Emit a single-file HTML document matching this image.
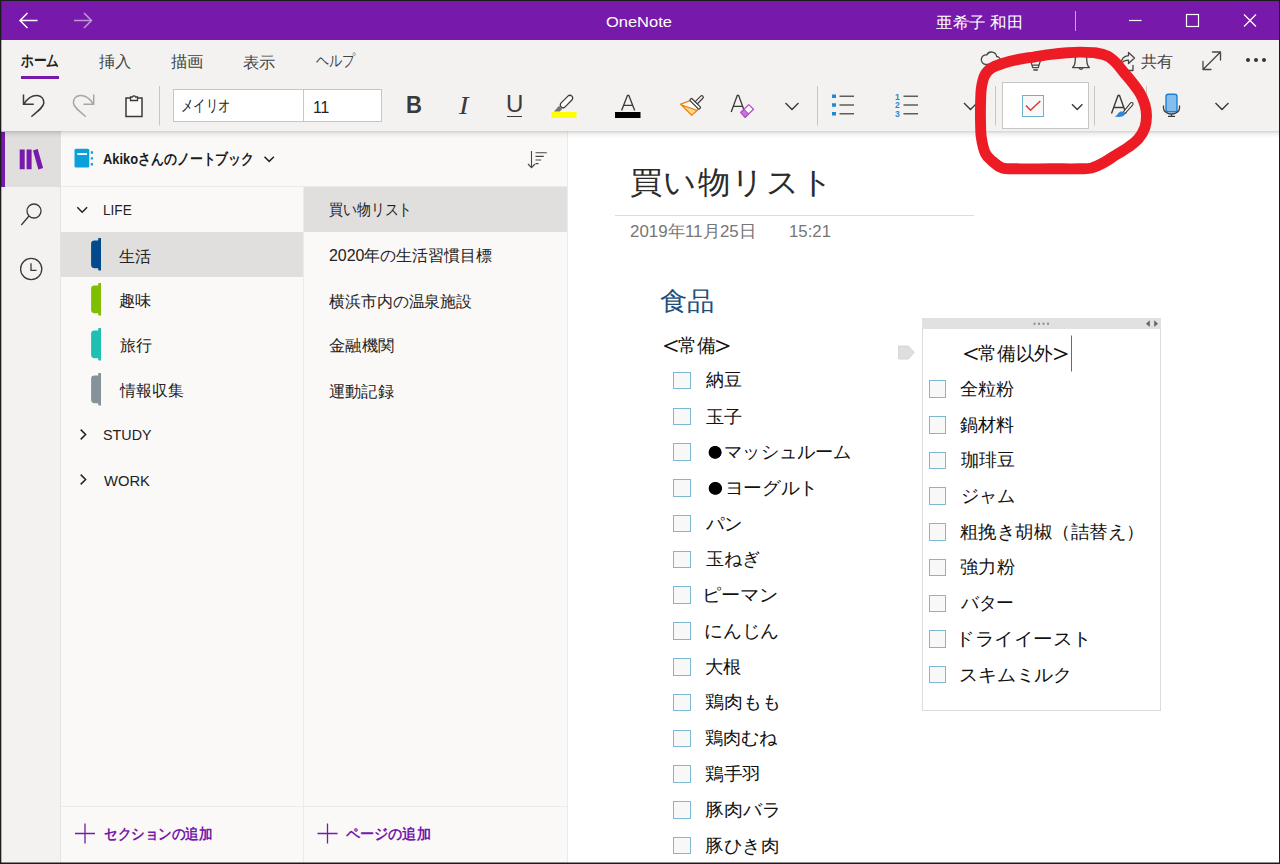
<!DOCTYPE html>
<html lang="ja">
<head>
<meta charset="utf-8">
<title>OneNote</title>
<style>
*{box-sizing:border-box;margin:0;padding:0}
html,body{width:1280px;height:864px;overflow:hidden;background:#fff}
body{position:relative;font-family:"Liberation Sans",sans-serif;color:#222;font-size:15px}
.a{position:absolute}
.t{position:absolute;white-space:nowrap;line-height:1;transform-origin:0 50%}
svg{position:absolute;overflow:visible}
/* window frame */
#frame{left:0;top:0;width:1280px;height:864px;border:1px solid #1b1b1b;box-shadow:inset 0 -1px 0 rgba(27,27,27,.5),inset 1px 0 0 rgba(27,27,27,.3);z-index:50;pointer-events:none}
#title{left:0;top:0;width:1280px;height:40px;background:#7719aa}
#rib{left:0;top:40px;width:1280px;height:91px;background:#f3f2f1}
#ribshadow{left:0;top:131px;width:1280px;height:7px;background:linear-gradient(rgba(0,0,0,.17),rgba(0,0,0,.06) 40%,rgba(0,0,0,0))}
#rail{left:0;top:131px;width:61px;height:733px;background:#f3f2f1}
#railsel{left:0;top:131px;width:61px;height:56px;background:#e1dfdd}
#railbar{left:1px;top:132px;width:4px;height:55px;background:#7719aa}
#secpane{left:61px;top:131px;width:243px;height:733px;background:#faf9f8}
#pagepane{left:304px;top:131px;width:264px;height:733px;background:#faf9f8;border-right:1px solid #edebe9}
#content{left:568px;top:131px;width:712px;height:733px;background:#fff}
.cb{width:17.500px;height:17.500px;background:#f8f8f8;border:1.200px solid #7db9d2}
.it{font-size:18px;color:#111}
.dot{display:inline-block;width:18px;height:18px;color:transparent;overflow:hidden;vertical-align:top;background:radial-gradient(circle at 50% 52%,#000 6px,rgba(0,0,0,0) 6.800px)}
.br{font-size:1.450em;line-height:0;vertical-align:-.070em}.brl{margin-right:-6.500px}.brr{margin-left:-6.500px}
</style>
</head>
<body>
<div class="a" id="title"></div>
<div class="a" id="rib"></div>
<div class="a" id="rail"></div>
<div class="a" id="railsel"></div>
<div class="a" id="railbar"></div>
<div class="a" id="secpane"></div>
<div class="a" id="pagepane"></div>
<div class="a" id="content"></div>
<div class="a" id="ribshadow"></div>
<!--TITLEBAR-->
<svg style="left:0;top:0" width="1280" height="40" fill="none" stroke="#fff" stroke-width="1.5">
<path d="M37.5 20.5H20M27.5 13 20 20.5 27.5 28"/>
<path d="M74 20.5H91.5M84 13 91.5 20.5 84 28" stroke-opacity=".55"/>
<path d="M1075.5 11V31" stroke-width="1" stroke-opacity=".6"/>
<path d="M1129 20.5H1141.5" stroke-width="1.2"/>
<rect x="1186.5" y="14.5" width="12" height="12" stroke-width="1.2"/>
<path d="M1244 14.5 1256 26.5M1256 14.5 1244 26.5" stroke-width="1.2"/>
</svg>
<div class="t" id="t_app" style="left:605.68px;top:13.75px;font-size:15.5px;color:#fff;transform:scaleX(1.0616)">OneNote</div>
<div class="t" id="t_user" style="left:936.25px;top:14.87px;font-size:16px;color:#fff;transform:scaleX(1.0336)">亜希子 和田</div>
<!--TABS-->
<div class="t" id="tab0" style="left:21.00px;top:53.00px;font-size:16px;font-weight:bold;color:#222;transform:scaleX(0.7927)">ホーム</div>
<div class="a" style="left:21px;top:76px;width:38px;height:3px;background:#7719aa"></div>
<div class="t" id="tab1" style="left:98.51px;top:54.13px;font-size:16px;color:#444;transform:scaleX(1.0083)">挿入</div>
<div class="t" id="tab2" style="left:170.75px;top:54.13px;font-size:16px;color:#444;transform:scaleX(1.0249)">描画</div>
<div class="t" id="tab3" style="left:242.97px;top:54.50px;font-size:16px;color:#444;transform:scaleX(1.0174)">表示</div>
<div class="t" id="tab4" style="left:316.24px;top:53.00px;font-size:16px;color:#444;transform:scaleX(0.8181)">ヘルプ</div>
<svg style="left:0;top:0" width="1280" height="131" fill="none" stroke="#484644" stroke-width="1.3" stroke-linecap="round" stroke-linejoin="round">
<!-- cloud -->
<path d="M985.5 64.5h10.5a4 4 0 0 0 .6-8 5.2 5.2 0 0 0-9.8-1.6 4.4 4.4 0 0 0-1.3 9.6z"/>
<!-- bulb -->
<path d="M1030.900 61.600c-1.200-1.200-1.500-2.200-1.500-3.200a6.100 6.100 0 0 1 12.200 0c0 1-.300 2-1.500 3.200l-1.900 6.100h-5.400zM1033.200 65.200h5M1033.800 70h3.600"/>
<!-- bell -->
<path d="M1072.600 67.600c2-1.800 2.600-3.600 2.600-7.600 0-4.200 2.300-6.800 5.800-6.800s5.800 2.600 5.800 6.800c0 4 .600 5.800 2.600 7.600zM1079.200 68.300a2 2 0 0 0 3.600 0"/>
<!-- share -->
<path d="M1128.500 52.500l6 5.500-6 5.500v-3.400c-3.600 0-6 1.400-7.500 4 .3-5 3-8 7.500-8.400zM1124.500 66.500v4h8.500v-5"/>
<!-- expand -->
<path d="M1203 69.500 1220.500 52M1212.500 52h8v8M1203 61.500v8h8"/>
</svg>
<div class="a" style="left:1245.500px;top:58px;width:4px;height:4px;border-radius:2px;background:#333;box-shadow:8px 0 0 #333,16px 0 0 #333"></div>
<div class="t" id="t_share" style="left:1141.25px;top:53.88px;font-size:15.500px;color:#444;transform:scaleX(1.0081)">共有</div>
<!--RIBBON-->
<svg style="left:0;top:0" width="1280" height="131" fill="none" stroke="#3b3a39" stroke-width="1.5" stroke-linecap="butt" stroke-linejoin="miter">
<!-- undo -->
<path d="M23.500 94.500V104.300H33.800M23.800 104c3.500-5.500 8.500-8.800 13.400-8.600 4.400.3 7 3.700 6.600 7.800-.5 4-5 7.500-12.500 13.500"/>
<!-- redo -->
<path stroke="#a8a6a4" d="M93.700 94.500V104.300H83.400M93.400 104c-3.500-5.500-8.500-8.800-13.400-8.600-4.400.3-7 3.700-6.600 7.800.5 4 5 7.500 12.500 13.500"/>
<!-- clipboard -->
<path fill="#faf9f8" d="M126 98h16v18.500h-16z"/>
<path fill="#faf9f8" d="M130.500 100.500v-3.500h2a1.600 1.600 0 0 1 3 0h2v3.500z" stroke-width="1.300"/>
<!-- separators -->
<path stroke="#c8c6c4" stroke-width="1" d="M159.500 86V125.500M817.500 86V125.500M995.500 86V125.500M1094.500 86V125.500M1146.500 86V125.500"/>
</svg>
<div class="a" style="left:173px;top:89px;width:209px;height:33px;background:#fff;border:1px solid #c8c6c4"></div>
<div class="a" style="left:303px;top:90px;width:1px;height:31px;background:#c8c6c4"></div>
<div class="t" id="t_font" style="left:181.19px;top:98.00px;font-size:15.500px;color:#222;transform:scaleX(0.7757)">メイリオ</div>
<div class="t" id="t_size" style="left:312.50px;top:99.50px;font-size:16px;color:#222;transform:scaleX(0.9865)">11</div>
<div class="t" id="t_B" style="left:405.79px;top:94.18px;font-size:23.600px;font-weight:bold;color:#3b3a39;transform:scaleX(0.9339)">B</div>
<div class="t" id="t_I" style="left:459.21px;top:92.55px;font-size:25px;font-style:italic;font-family:'Liberation Serif',serif;color:#3b3a39;transform:scaleX(1.1433)">I</div>
<div class="t" id="t_U" style="left:506.18px;top:93.03px;font-size:23.300px;color:#3b3a39;transform:scaleX(1.0319)">U</div>
<div class="a" style="left:507px;top:115.500px;width:14.500px;height:1.500px;background:#3b3a39"></div>
<!-- highlighter -->
<svg style="left:0;top:0" width="1280" height="131" fill="none" stroke="#3b3a39" stroke-width="1.300" stroke-linejoin="round">
<path d="M559 105.800l3.300 3.300-2.600 2.400h-5.700z" fill="#757575" stroke="none"/>
<g transform="translate(566.300 101.700) rotate(-45)"><rect x="-7.300" y="-2.800" width="15.200" height="5.600" rx="2.800" fill="#fbfbfb"/></g>
<rect x="551.500" y="112" width="25" height="6" fill="#ffff00" stroke="none"/>
<rect x="615" y="112" width="25.500" height="6" fill="#000" stroke="none"/>
<path d="M621.600 110.500 627.500 95.300h1.300L634.700 110.500M623.700 105.300h8.900" stroke-width="1.350" stroke-linejoin="miter"/>
</svg>
<!-- format painter -->
<svg style="left:0;top:0" width="1280" height="131" fill="none" stroke-linejoin="round">
<g transform="translate(695.2 103.8) rotate(45)">
<path d="M-5.700 1.300H6.200L5.500 10.500H-9.900z" fill="#fff" stroke="#e8861c" stroke-width="1.300"/>
<path d="M-7 9.600 6 3.300 5.500 10.500H-9.900z" fill="#fcd88a" stroke="#e8861c" stroke-width="1.100"/>
<rect x="-1.500" y="-10.800" width="3" height="10" rx="1.500" fill="#faf9f8" stroke="#3b3a39" stroke-width="1.200"/>
<rect x="-6.600" y="-1.400" width="13.200" height="2.800" rx=".800" fill="#fff" stroke="#3b3a39" stroke-width="1.200"/>
</g>
</svg>
<!-- A eraser -->
<svg style="left:0;top:0" width="1280" height="131" fill="none">
<path d="M731.200 112 737.300 95.300h1.300L744.700 112M733.400 106.300h9.200" stroke="#3b3a39" stroke-width="1.350"/>
<path d="M740.800 112.500 748.700 104.600 753.500 109.200 745.200 117.300z" fill="#fff" stroke="#b14fc5" stroke-width="1.300" stroke-linejoin="round"/>
<path d="M740.800 112.500 743.900 109.400 748.500 114 745.200 117.300z" fill="#c875d8" stroke="#b14fc5" stroke-width="1.100" stroke-linejoin="round"/>
<!-- chevrons -->
<path d="M785.500 103l6.500 6.500 6.500-6.500M964 103l6.500 6.500 6.500-6.500M1215.500 103l6.500 6.500 6.500-6.500" stroke="#3b3a39" stroke-width="1.400"/>
<!-- bullets -->
<path d="M832 96.300h4M832 105h4M832 113.700h4" stroke="#1e8ad6" stroke-width="3.600"/>
<path d="M839.500 96.300h14.500M839.500 105h14.500M839.500 113.700h14.500M903.500 96.300h14.500M903.500 105h14.500M903.500 113.700h14.500" stroke="#605e5c" stroke-width="1.500"/>
</svg>
<div class="t" style="left:895px;top:92.500px;font-size:8.500px;font-weight:bold;color:#1e8ad6;line-height:8.700px;white-space:pre">1
2
3</div>
<!-- todo tag button -->
<div class="a" style="left:1002px;top:82px;width:87px;height:47px;background:#fff;border:1px solid #c8c6c4"></div>
<div class="a" style="left:1022px;top:94.500px;width:22px;height:22px;background:#f8f8f8;border:1.300px solid #6fb1cc"></div>
<svg style="left:0;top:0" width="1280" height="131" fill="none">
<path d="M1026 105.500l4.500 4.800 9.800-9.300" stroke="#d83b30" stroke-width="1.500"/>
<path d="M1072 104.300l5.200 5.200 5.200-5.200" stroke="#3b3a39" stroke-width="1.400"/>
<!-- A brush -->
<path d="M1111.500 113.500 1118 95.500h1.500L1126 113.500M1113.800 107.500h9.500" stroke="#3b3a39" stroke-width="1.400"/>
<path d="M1132.500 102.800c.8.600.6 1.500 0 2.300l-7.500 8.500-1.800-1.500 7-8.800c.7-.9 1.600-1 2.300-.500z" fill="#fff" stroke="#3b3a39" stroke-width="1.100"/>
<path d="M1123 111.800c1.300.700 2 1.700 1.800 3-2.200 2.300-6 2.600-10.500 1.700 2-.8 3-1.800 4-3.300 1.200-1.700 3-2.200 4.700-1.400z" fill="#2b88d8"/>
<!-- mic -->
<rect x="1166" y="94.200" width="11" height="17.500" rx="2.200" fill="#83beec" stroke="#1e7fd4" stroke-width="1.400"/>
<path d="M1163.500 105.500v2.500a8 6 0 0 0 16 0v-2.500M1171.500 113.700v2.500M1168 116.400h7" stroke="#3b3a39" stroke-width="1.300"/>
</svg>
<!--RAIL-->
<svg style="left:0;top:0" width="61" height="864" fill="none" stroke="#3b3a39" stroke-width="1.300">
<path d="M19.700 149.600h5v19.700h-5zM26.600 149.600h5v19.700h-5zM33 150.400l4.700-1.300 5.400 19-4.700 1.300z" fill="#7719aa" stroke="none"/>
<circle cx="34" cy="211" r="7"/><path d="M29 216 21.300 225"/>
<circle cx="31.200" cy="269" r="10.600"/><path d="M31 263.300v7h5.500"/>
</svg>
<!--SECTIONS-->
<div class="a" style="left:60px;top:187px;width:1px;height:677px;background:#e6e4e2"></div>
<div class="a" style="left:61px;top:232px;width:243px;height:45px;background:#e1dfdd"></div>
<div class="a" style="left:61px;top:186px;width:507px;height:1px;background:#edebe9"></div>
<div class="a" style="left:303px;top:186px;width:1px;height:678px;background:#edebe9"></div>
<div class="a" style="left:61px;top:806px;width:507px;height:1px;background:#edebe9"></div>
<svg style="left:0;top:0" width="320" height="864" fill="none">
<rect x="74.500" y="148.800" width="14.800" height="18.800" rx="1.500" fill="#08a1dc"/>
<path d="M77.300 154h9.700" stroke="#fff" stroke-width="1.900"/>
<path d="M90.800 152.500h2.200M90.800 158.400h2.200M90.800 164.300h2.200" stroke="#0ea1de" stroke-width="2.400"/>
<path d="M264.500 156.700l4.700 4.700 4.700-4.700M77.300 207.300l4.900 4.900 4.900-4.900M80.700 429.600l4.900 4.900-4.900 4.900M80.700 474.600l4.900 4.900-4.900 4.900" stroke="#222" stroke-width="1.500"/>
<path d="M101 238h-2q-.800 0-.800.800v1.600h-3.700q-3.400 0-3.400 3.400v21q0 3.400 3.400 3.400h3.700v1.600q0 .800.800.800h2z" fill="#024a8c"/><path d="M101 283h-2q-.800 0-.800.800v1.600h-3.700q-3.400 0-3.400 3.400v21q0 3.400 3.400 3.400h3.700v1.600q0 .800.800.800h2z" fill="#7fbf00"/><path d="M101 328h-2q-.800 0-.800.800v1.600h-3.700q-3.400 0-3.400 3.400v21q0 3.400 3.400 3.400h3.700v1.600q0 .800.800.800h2z" fill="#1fbfb2"/><path d="M101 373h-2q-.800 0-.800.800v1.600h-3.700q-3.400 0-3.400 3.400v21q0 3.400 3.400 3.400h3.700v1.600q0 .800.800.800h2z" fill="#869299"/>
<path d="M75 833.500h20M85 823.500v20M317.500 833.500h20M327.500 823.500v20" stroke="#7719aa" stroke-width="1.300"/>
</svg>
<div class="t" id="s_nb" style="left:103.25px;top:151.00px;font-size:15px;font-weight:bold;color:#1b1b1b;transform:scaleX(0.8592)">Akikoさんのノートブック</div>
<div class="t" id="s_life" style="left:103.10px;top:202.36px;font-size:15px;color:#222;transform:scaleX(0.9083)">LIFE</div>
<div class="t" id="s_1" style="left:118.66px;top:248.64px;font-size:15.500px;color:#222;transform:scaleX(1.0029)">生活</div>
<div class="t" id="s_2" style="left:118.88px;top:292.85px;font-size:15.500px;color:#222;transform:scaleX(1.0185)">趣味</div>
<div class="t" id="s_3" style="left:119.63px;top:337.62px;font-size:15.500px;color:#222;transform:scaleX(1.0021)">旅行</div>
<div class="t" id="s_4" style="left:120.10px;top:382.62px;font-size:15.500px;color:#222;transform:scaleX(0.9944)">情報収集</div>
<div class="t" id="s_study" style="left:102.79px;top:427.36px;font-size:15px;color:#222;transform:scaleX(0.9542)">STUDY</div>
<div class="t" id="s_work" style="left:104.00px;top:472.88px;font-size:15px;color:#222;transform:scaleX(0.9837)">WORK</div>
<div class="t" id="s_add" style="left:103.59px;top:826.00px;font-size:15px;font-weight:bold;color:#7719aa;transform:scaleX(0.9048)">セクションの追加</div>
<!--PAGES-->
<div class="a" style="left:304px;top:187px;width:263px;height:45px;background:#e1dfdd"></div>
<svg style="left:0;top:0" width="600" height="200" fill="none" stroke="#484644" stroke-width="1.100">
<path d="M531.500 151v16.500M528 164l3.500 3.700 3.500-3.700M535.500 152.800h11.300M535.500 156.400h8.300M535.500 160h5.700M535.500 163.600h3"/>
</svg>
<div class="t" id="p_0" style="left:328.70px;top:202.00px;font-size:16px;color:#1b1b1b;transform:scaleX(0.8681)">買い物リスト</div>
<div class="t" id="p_1" style="left:328.75px;top:248.12px;font-size:16px;color:#222;transform:scaleX(0.9969)">2020年の生活習慣目標</div>
<div class="t" id="p_2" style="left:329.00px;top:293.50px;font-size:16px;color:#222;transform:scaleX(0.9947)">横浜市内の温泉施設</div>
<div class="t" id="p_3" style="left:329.20px;top:338.12px;font-size:16px;color:#222;transform:scaleX(1.0203)">金融機関</div>
<div class="t" id="p_4" style="left:329.45px;top:383.50px;font-size:16px;color:#222;transform:scaleX(1.0124)">運動記録</div>
<div class="t" id="p_add" style="left:346.03px;top:826.00px;font-size:15px;font-weight:bold;color:#7719aa;transform:scaleX(0.9411)">ページの追加</div>
<!--CONTENT-->
<div class="t" id="c_title" style="-webkit-text-stroke:0;left:629.96px;top:166.50px;font-size:31px;color:#2b2b2b;letter-spacing:1px;transform:scaleX(1.0445)">買い物リスト</div>
<div class="a" style="left:615px;top:214.500px;width:359px;height:1px;background:#dcdcdc"></div>
<div class="t" id="c_date" style="left:629.71px;top:223.44px;font-size:16.500px;color:#767676;transform:scaleX(1.0237)">2019年11月25日</div>
<div class="t" id="c_time" style="left:789.20px;top:223.44px;font-size:16.500px;color:#767676;transform:scaleX(1.0160)">15:21</div>
<div class="t" id="c_h" style="left:660.45px;top:289.25px;font-size:25.500px;color:#1e4e79;transform:scaleX(1.0511)">食品</div>
<div class="t" id="c_l0" style="left:656.61px;top:335.88px;font-size:19.200px;color:#111;transform:scaleX(0.9846)"><span class="br brl">＜</span>常備<span class="br brr">＞</span></div>
<div class="a" style="left:922px;top:318px;width:239px;height:393px;border:1px solid #dcdcdc;background:#fff"></div>
<div class="a" style="left:922px;top:318px;width:239px;height:11px;background:#e1e1e1"></div>
<svg style="left:0;top:0" width="1280" height="400" fill="none">
<path d="M1033.500 323.700h2M1038 323.700h2M1042.500 323.700h2M1047 323.700h2" stroke="#8a8a8a" stroke-width="2"/>
<path d="M1149.800 320.300v6.800l-3.800-3.400zM1154.200 320.300v6.800l3.800-3.400z" fill="#666"/>
<path d="M898.500 346h10l5.800 6.500-5.800 6.500h-10z" fill="#dedede" stroke="#d0d0d0" stroke-width=".800"/>
<path d="M1071.500 335.500v36" stroke="#6a6a6a" stroke-width="1"/>
</svg>
<div class="t" id="c_r0" style="left:957.40px;top:344.38px;font-size:19.200px;color:#111;transform:scaleX(0.9840)"><span class="br brl">＜</span>常備以外<span class="br brr">＞</span></div>
<div class="a cb" style="left:673px;top:371.8px"></div><div class="t it" id="l_0" style="left:705.50px;top:371.38px;transform:scaleX(1.0001)">納豆</div>
<div class="a cb" style="left:673px;top:407.6px"></div><div class="t it" id="l_1" style="left:705.75px;top:407.55px;transform:scaleX(1.0072)">玉子</div>
<div class="a cb" style="left:673px;top:443.3px"></div><div class="t it" id="l_2" style="left:705.98px;top:443.00px;transform:scaleX(1.0106)"><span class="dot">●</span>マッシュルーム</div>
<div class="a cb" style="left:673px;top:479.1px"></div><div class="t it" id="l_3" style="left:705.97px;top:478.80px;transform:scaleX(1.0388)"><span class="dot">●</span>ヨーグルト</div>
<div class="a cb" style="left:673px;top:514.9px"></div><div class="t it" id="l_4" style="left:705.50px;top:514.60px;transform:scaleX(1.0215)">パン</div>
<div class="a cb" style="left:673px;top:550.6px"></div><div class="t it" id="l_5" style="left:705.75px;top:550.40px;transform:scaleX(1.0048)">玉ねぎ</div>
<div class="a cb" style="left:673px;top:586.4px"></div><div class="t it" id="l_6" style="left:701.79px;top:586.10px;transform:scaleX(1.0625)">ピーマン</div>
<div class="a cb" style="left:673px;top:622.2px"></div><div class="t it" id="l_7" style="left:703.65px;top:621.90px;transform:scaleX(1.0436)">にんじん</div>
<div class="a cb" style="left:673px;top:658.0px"></div><div class="t it" id="l_8" style="left:704.71px;top:657.95px;transform:scaleX(1.0153)">大根</div>
<div class="a cb" style="left:673px;top:693.7px"></div><div class="t it" id="l_9" style="left:705.42px;top:693.40px;transform:scaleX(1.0478)">鶏肉もも</div>
<div class="a cb" style="left:673px;top:729.5px"></div><div class="t it" id="l_10" style="left:705.48px;top:729.20px;transform:scaleX(1.0071)">鶏肉むね</div>
<div class="a cb" style="left:673px;top:765.3px"></div><div class="t it" id="l_11" style="left:705.44px;top:765.25px;transform:scaleX(1.0345)">鶏手羽</div>
<div class="a cb" style="left:673px;top:801.0px"></div><div class="t it" id="l_12" style="left:704.67px;top:800.70px;transform:scaleX(1.0516)">豚肉バラ</div>
<div class="a cb" style="left:673px;top:836.8px"></div><div class="t it" id="l_13" style="left:705.19px;top:836.50px;transform:scaleX(1.0291)">豚ひき肉</div>
<div class="a cb" style="left:928.500px;top:380.3px"></div><div class="t it" id="r_0" style="left:960.49px;top:380.00px;transform:scaleX(1.0054)">全粒粉</div>
<div class="a cb" style="left:928.500px;top:416.0px"></div><div class="t it" id="r_1" style="left:960.25px;top:415.57px;transform:scaleX(1.0003)">鍋材料</div>
<div class="a cb" style="left:928.500px;top:451.7px"></div><div class="t it" id="r_2" style="left:961.00px;top:451.15px;transform:scaleX(1.0001)">珈琲豆</div>
<div class="a cb" style="left:928.500px;top:487.4px"></div><div class="t it" id="r_3" style="left:960.97px;top:487.10px;transform:scaleX(1.0098)">ジャム</div>
<div class="a cb" style="left:928.500px;top:523.1px"></div><div class="t it" id="r_4" style="left:960.25px;top:522.80px;transform:scaleX(1.0252)">粗挽き胡椒（詰替え）</div>
<div class="a cb" style="left:928.500px;top:558.8px"></div><div class="t it" id="r_5" style="left:960.48px;top:558.38px;transform:scaleX(1.0147)">強力粉</div>
<div class="a cb" style="left:928.500px;top:594.5px"></div><div class="t it" id="r_6" style="left:961.00px;top:594.20px;transform:scaleX(0.9861)">バター</div>
<div class="a cb" style="left:928.500px;top:630.2px"></div><div class="t it" id="r_7" style="left:954.98px;top:629.90px;transform:scaleX(1.0862)">ドライイースト</div>
<div class="a cb" style="left:928.500px;top:665.9px"></div><div class="t it" id="r_8" style="left:959.41px;top:665.60px;transform:scaleX(1.0486)">スキムミルク</div>
<!--REDCIRCLE-->
<svg id="redc" style="left:0;top:0;z-index:40" width="1280" height="864" fill="none"><path d="M1080.1 52.1C1085.0 52.2 1091.7 52.3 1096.3 53.0C1100.9 53.6 1104.4 54.6 1107.7 56.2C1110.9 57.8 1113.1 60.0 1115.8 62.7C1118.5 65.4 1121.2 69.2 1123.9 72.4C1126.6 75.6 1129.3 78.6 1132.0 82.1C1134.7 85.6 1137.9 89.7 1140.1 93.4C1142.2 97.2 1143.8 101.0 1144.9 104.8C1146.0 108.6 1146.5 112.3 1146.5 116.1C1146.5 119.9 1146.3 123.7 1144.9 127.5C1143.6 131.2 1141.1 135.6 1138.4 138.8C1135.7 142.0 1132.5 144.2 1128.7 146.9C1125.0 149.6 1120.1 152.3 1115.8 155.0C1111.5 157.7 1106.9 160.9 1102.8 163.1C1098.8 165.3 1095.3 167.0 1091.5 168.0C1087.7 168.9 1086.9 168.6 1080.1 168.8C1073.4 168.9 1061.2 168.8 1051.0 168.8C1040.7 168.8 1026.7 168.9 1018.6 168.8C1010.5 168.6 1006.7 169.2 1002.4 168.0C998.1 166.7 995.5 163.9 992.7 161.5C989.8 159.0 987.3 157.4 985.4 153.4C983.5 149.3 982.1 142.6 981.3 137.2C980.5 131.8 980.7 126.4 980.5 121.0C980.4 115.6 980.4 110.2 980.5 104.8C980.7 99.4 980.7 93.4 981.3 88.6C982.0 83.7 983.0 79.0 984.6 75.6C986.2 72.3 988.1 70.4 991.1 68.3C994.0 66.3 997.8 65.0 1002.4 63.5C1007.0 62.0 1013.2 60.5 1018.6 59.4C1024.0 58.3 1029.4 57.7 1034.8 56.8C1040.2 56.0 1045.6 54.9 1051.0 54.3C1056.4 53.6 1062.3 53.1 1067.2 52.8C1072.0 52.4 1075.3 52.1 1080.1 52.1Z" stroke="#ed1c24" stroke-width="10.9" stroke-linejoin="round" stroke-linecap="round"/></svg>
<div class="a" id="frame"></div>
</body>
</html>
